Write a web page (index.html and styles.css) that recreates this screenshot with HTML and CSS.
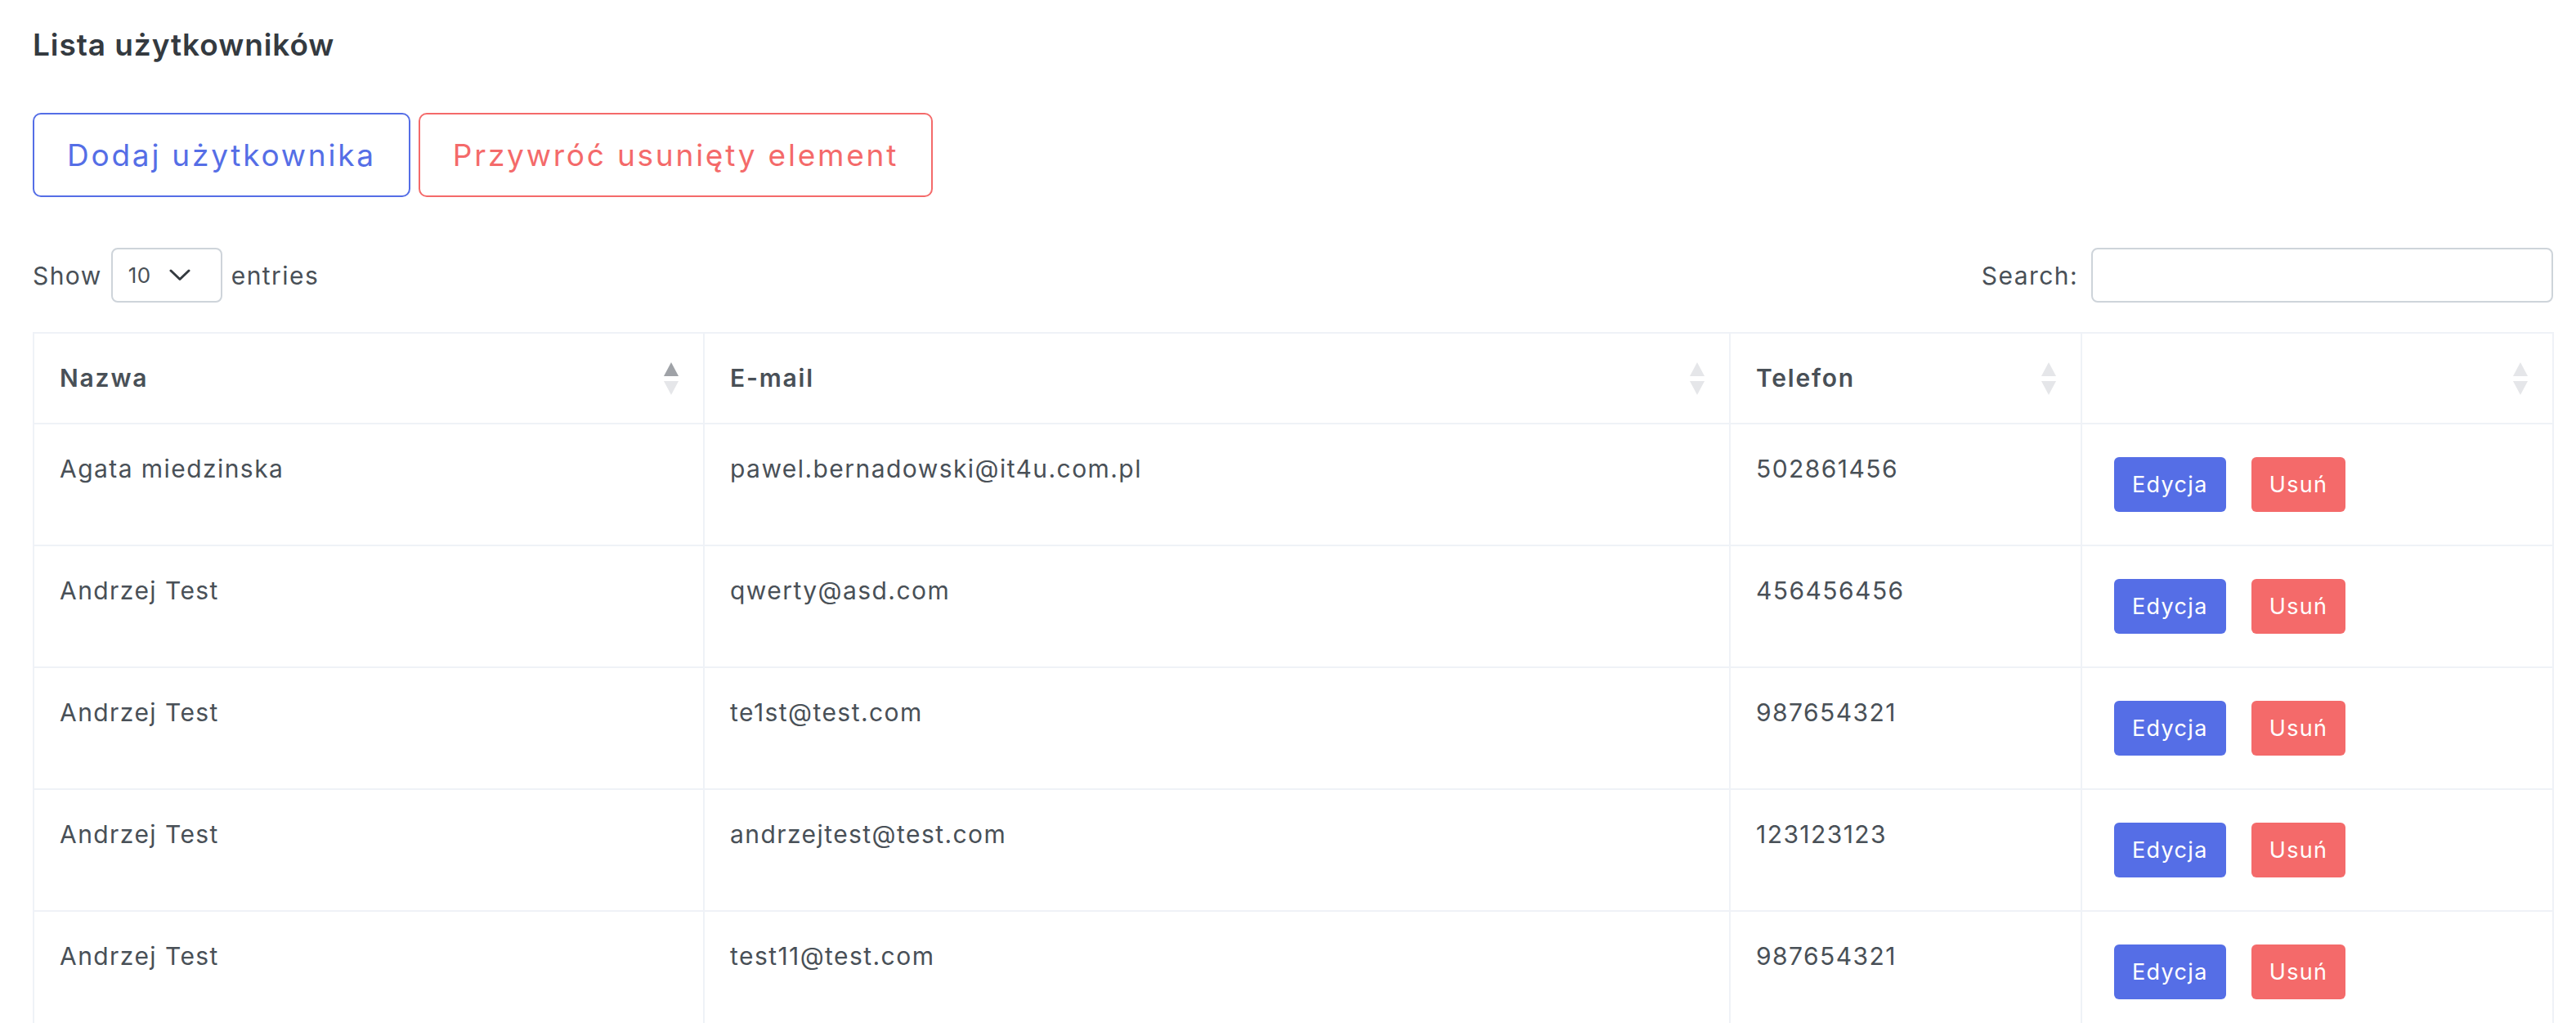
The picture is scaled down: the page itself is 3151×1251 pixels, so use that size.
FILE: index.html
```html
<!DOCTYPE html>
<html lang="pl">
<head>
<meta charset="utf-8">
<title>Lista użytkowników</title>
<link rel="stylesheet" href="styles.css">
</head>
<body>
<div class="page">
  <h4 class="title">Lista użytkowników</h4>
  <div class="actions">
    <button class="btn-outline btn-outline-primary">Dodaj użytkownika</button>
    <button class="btn-outline btn-outline-danger">Przywróć usunięty element</button>
  </div>
  <div class="controls">
    <label class="length">Show
      <span class="select"><span class="select-value">10</span>
        <svg class="chevron" width="26" height="15" viewBox="0 0 26 15"><path d="M2 2 L13 12.5 L24 2" fill="none" stroke="#343a40" stroke-width="3" stroke-linecap="round" stroke-linejoin="round"/></svg>
      </span>
    entries</label>
    <label class="search">Search:<input type="search" class="search-input"></label>
  </div>
  <table class="grid">
    <colgroup>
      <col class="c-name"><col class="c-mail"><col class="c-phone"><col class="c-ops">
    </colgroup>
    <thead>
      <tr>
        <th>Nazwa<svg class="sort" width="20" height="41" viewBox="0 0 20 41"><polygon points="10,0 19,17 1,17" fill="#9fa2a7"/><polygon points="1,23 19,23 10,40" fill="#e5e6e9"/></svg></th>
        <th>E-mail<svg class="sort" width="20" height="41" viewBox="0 0 20 41"><polygon points="10,0 19,17 1,17" fill="#e5e6e9"/><polygon points="1,23 19,23 10,40" fill="#e5e6e9"/></svg></th>
        <th>Telefon<svg class="sort" width="20" height="41" viewBox="0 0 20 41"><polygon points="10,0 19,17 1,17" fill="#e5e6e9"/><polygon points="1,23 19,23 10,40" fill="#e5e6e9"/></svg></th>
        <th><svg class="sort" width="20" height="41" viewBox="0 0 20 41"><polygon points="10,0 19,17 1,17" fill="#e5e6e9"/><polygon points="1,23 19,23 10,40" fill="#e5e6e9"/></svg></th>
      </tr>
    </thead>
    <tbody>
      <tr>
        <td>Agata miedzinska</td><td>pawel.bernadowski@it4u.com.pl</td><td>502861456</td>
        <td class="ops"><div class="ops-wrap"><button class="btn-sm btn-primary">Edycja</button><button class="btn-sm btn-danger">Usuń</button></div></td>
      </tr>
      <tr>
        <td>Andrzej Test</td><td>qwerty@asd.com</td><td>456456456</td>
        <td class="ops"><div class="ops-wrap"><button class="btn-sm btn-primary">Edycja</button><button class="btn-sm btn-danger">Usuń</button></div></td>
      </tr>
      <tr>
        <td>Andrzej Test</td><td>te1st@test.com</td><td>987654321</td>
        <td class="ops"><div class="ops-wrap"><button class="btn-sm btn-primary">Edycja</button><button class="btn-sm btn-danger">Usuń</button></div></td>
      </tr>
      <tr>
        <td>Andrzej Test</td><td>andrzejtest@test.com</td><td>123123123</td>
        <td class="ops"><div class="ops-wrap"><button class="btn-sm btn-primary">Edycja</button><button class="btn-sm btn-danger">Usuń</button></div></td>
      </tr>
      <tr>
        <td>Andrzej Test</td><td>test11@test.com</td><td>987654321</td>
        <td class="ops"><div class="ops-wrap"><button class="btn-sm btn-primary">Edycja</button><button class="btn-sm btn-danger">Usuń</button></div></td>
      </tr>
    </tbody>
  </table>
</div>
</body>
</html>
```
FILE: styles.css
```css
html { overflow: hidden; }
body {
  margin: 0;
  background: #fff;
  color: #495057;
  font-family: Inter, "Noto Sans", sans-serif;
  letter-spacing: 0.09em;
}
.page { padding: 33px 28px 0 40px; }
.title {
  margin: 0;
  font-size: 37px;
  line-height: 44px;
  font-weight: 600;
  color: #343a40;
  letter-spacing: 0.025em;
}
.actions { display: flex; gap: 10px; margin-top: 61px; }
.btn-outline {
  height: 103px;
  padding: 0 40px;
  border: 2px solid;
  border-radius: 10px;
  background: #fff;
  font-family: inherit;
  font-size: 37px;
  font-weight: 400;
  letter-spacing: 0.075em;
}
.btn-outline-primary { border-color: #556ee6; color: #556ee6; }
.btn-outline-danger { border-color: #f46a6a; color: #f46a6a; }

.controls {
  display: flex;
  justify-content: space-between;
  align-items: center;
  margin-top: 62px;
  height: 67px;
  font-size: 30px;
}
.length { display: flex; align-items: center; gap: 11px; }
.select {
  box-sizing: border-box;
  width: 136px;
  height: 67px;
  border: 2px solid #ced4da;
  border-radius: 8px;
  display: flex;
  align-items: center;
  gap: 22px;
  padding-left: 19px;
  font-size: 26px;
  letter-spacing: 0.02em;
}
.search { display: flex; align-items: center; gap: 16px; }
.search-input {
  box-sizing: border-box;
  width: 565px;
  height: 67px;
  border: 2px solid #ced4da;
  border-radius: 8px;
  outline: none;
}

.grid {
  width: 100%;
  margin-top: 36px;
  border-collapse: collapse;
  table-layout: fixed;
}
.c-name { width: 820px; }
.c-mail { width: 1255px; }
.c-phone { width: 430px; }
.c-ops { width: 577px; }
.grid th, .grid td {
  border: 2px solid #eff2f7;
  padding: 32px 31px;
  text-align: left;
  vertical-align: top;
  font-size: 30px;
  line-height: 45px;
}
.grid th { font-weight: 600; position: relative; vertical-align: middle; color: #495057; letter-spacing: 0.06em; }
.sort { position: absolute; right: 29px; top: 50%; margin-top: -20px; }
.grid td.ops { vertical-align: middle; padding: 40px 32px 40px 39px; }
.ops-wrap { display: flex; gap: 31px; }
.btn-sm {
  height: 67px;
  padding: 0 22px;
  border: 0;
  border-radius: 6px;
  color: #fff;
  font-family: inherit;
  font-size: 27px;
  letter-spacing: 0.05em;
}
.btn-primary { background: #556ee6; }
.btn-danger { background: #f46a6a; }
```
